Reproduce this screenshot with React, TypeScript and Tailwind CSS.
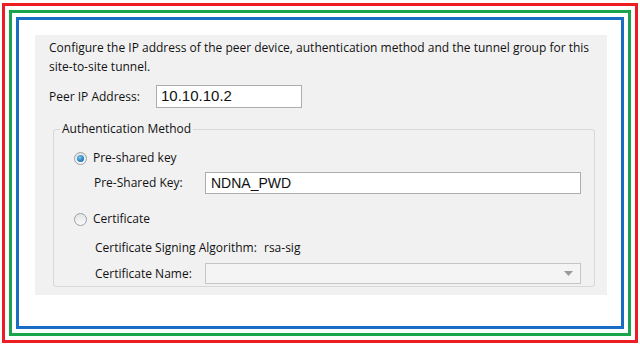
import React from "react";

const font = { fontFamily: '"Open Sans", "Noto Sans", sans-serif' };

function Radio({ checked }: { checked: boolean }) {
  return (
    <span className="flex items-center justify-center w-[13px] h-[13px] rounded-full border border-[#9aa0a6] bg-gradient-to-b from-[#e4e4e4] to-[#fafafa] shrink-0">
      {checked && (
        <span className="w-[7px] h-[7px] rounded-full bg-[radial-gradient(circle_at_40%_35%,#7cc8f0_0%,#2a86c4_55%,#175f93_100%)]" />
      )}
    </span>
  );
}

export default function App() {
  return (
    <div className="w-[640px] h-[348px] bg-white pt-[3px] pl-[2px] pr-[2px] pb-[5px]" style={font}>
      <div className="h-full border-[3px] border-[#ee1d23] p-[4px]">
        <div className="h-full border-[3px] border-[#18a54c] p-[4px]">
          <div className="h-full border-[3px] border-[#1a6dc4] pt-[15px] pl-[16px] pr-[14px] pb-[31px]">
            <div className="h-full bg-[#f1f1f1] pl-[14px] pt-[3px] text-[12px] text-[#111]">
              <p className="leading-[19px]">
                Configure the IP address of the peer device, authentication method and the tunnel group for this
                <br />
                site-to-site tunnel.
              </p>
              <div className="flex items-center h-[23px] mt-[9px]">
                <span className="w-[107px]">Peer IP Address:</span>
                <div className="w-[146px] h-[23px] bg-white border border-[#abadb3] flex items-center pl-[4px] text-[15px] text-[#111]" style={{ fontFamily: '"Liberation Sans", Arial, sans-serif' }}>
                  10.10.10.2
                </div>
              </div>
              <fieldset className="ml-[4px] mr-[12px] mt-[13px] border border-[#d8d8d8] rounded-[3px] pb-[2px]">
                <legend className="ml-[6px] px-[2px] leading-[16px]">Authentication Method</legend>
                <div className="flex items-center h-[18px] mt-[12px] pl-[20px] gap-[6px]">
                  <Radio checked />
                  <span>Pre-shared key</span>
                </div>
                <div className="flex items-center h-[22px] mt-[5px] pl-[40px] pr-[13px]">
                  <span className="w-[111px] shrink-0">Pre-Shared Key:</span>
                  <div className="flex-1 h-[22px] bg-white border border-[#abadb3] flex items-center pl-[5px] text-[14px] text-[#111]" style={{ fontFamily: '"Liberation Sans", Arial, sans-serif' }}>
                    NDNA_PWD
                  </div>
                </div>
                <div className="flex items-center h-[18px] mt-[16px] pl-[20px] gap-[6px]">
                  <Radio checked={false} />
                  <span>Certificate</span>
                </div>
                <div className="flex items-center h-[18px] mt-[11px] pl-[41px]">
                  <span className="w-[169px] shrink-0">Certificate Signing Algorithm:</span>
                  <span>rsa-sig</span>
                </div>
                <div className="flex items-center h-[21px] mt-[6px] pl-[41px] pr-[13px]">
                  <span className="w-[110px] shrink-0">Certificate Name:</span>
                  <div className="flex-1 h-[21px] bg-[#f4f4f4] border border-[#c5c5c5] flex items-center justify-end pr-[7px]">
                    <svg width="9" height="5" viewBox="0 0 9 5">
                      <path d="M0 0 L9 0 L4.5 5 Z" fill="#9b9b9b" />
                    </svg>
                  </div>
                </div>
              </fieldset>
            </div>
          </div>
        </div>
      </div>
    </div>
  );
}
